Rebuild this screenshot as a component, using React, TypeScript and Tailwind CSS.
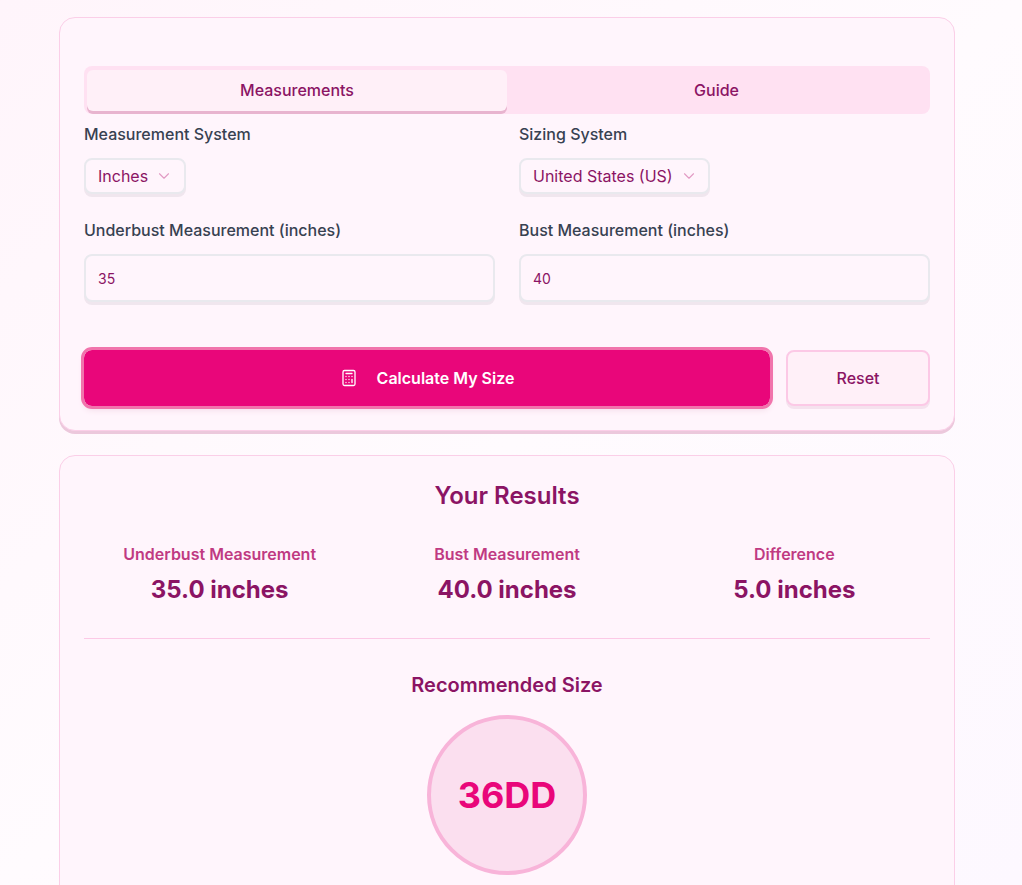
import { Calculator, ChevronDown } from "lucide-react";

const results = [
  { label: "Underbust Measurement", value: "35.0 inches" },
  { label: "Bust Measurement", value: "40.0 inches" },
  { label: "Difference", value: "5.0 inches" },
];

function SelectBox({ label }: { label: string }) {
  return (
    <button className="flex h-9 items-center gap-[7px] rounded-lg border-2 border-[#e9e9ee] bg-[#fff5fc] pl-3 pr-[10.5px] text-base text-[#8b1464] shadow-[0_3px_0_#f0e6ee]">
      {label}
      <ChevronDown className="h-[18px] w-[18px] text-[#e29ac4]" strokeWidth={1.5} />
    </button>
  );
}

function Field({ label, value }: { label: string; value: string }) {
  return (
    <div>
      <label className="block text-base font-[450] leading-6 text-[#374151]">{label}</label>
      <input
        readOnly
        value={value}
        className="mt-3 block h-12 w-full rounded-lg border-2 border-[#e9e9ee] bg-[#fff5fc] px-3 text-sm text-[#8b1464] shadow-[0_3px_0_#f0e6ee] outline-none"
      />
    </div>
  );
}

export default function App() {
  return (
    <div
      className="h-[885px] overflow-hidden bg-gradient-to-br from-[#fff5fb] via-[#fffbfe] to-[#fdf8ff] pr-2 text-[#8b1464]"
      style={{ fontFamily: "Inter, 'Noto Sans', sans-serif" }}
    >
      <div className="mx-auto w-[896px] pt-[17px]">
        {/* Calculator card */}
        <div className="rounded-2xl border border-[#fbcfe8] bg-[#fff5fc] px-6 pb-6 pt-12 shadow-[0_3px_0_#ecc8dc]">
          <div className="flex h-12 rounded-lg bg-[#ffe1f2] p-1">
            <button className="ml-[-1px] h-[41px] w-[420px] rounded-md bg-[#fff0f8] pb-[2px] text-base font-[450] text-[#8b1464] shadow-[0_3px_0_#e8b4cf]">
              Measurements
            </button>
            <button className="h-10 flex-1 pb-[1px] text-base font-[450] text-[#8b1464]">Guide</button>
          </div>

          <div className="mt-2 grid grid-cols-2 gap-x-6">
            <div>
              <div className="text-base font-[450] leading-6 text-[#374151]">Measurement System</div>
              <div className="mt-3 flex"><SelectBox label="Inches" /></div>
            </div>
            <div>
              <div className="text-base font-[450] leading-6 text-[#374151]">Sizing System</div>
              <div className="mt-3 flex"><SelectBox label="United States (US)" /></div>
            </div>
          </div>

          <div className="mt-6 grid grid-cols-2 gap-x-6">
            <Field label="Underbust Measurement (inches)" value="35" />
            <Field label="Bust Measurement (inches)" value="40" />
          </div>

          <div className="mt-12 flex items-center gap-4">
            <button className="flex h-14 w-[686px] items-center justify-center gap-[19px] rounded-lg bg-[#e9067a] text-base font-semibold text-white outline-3 outline-[#f174ac] shadow-[0_4px_6px_#f3dbe8]">
              <Calculator className="h-[18px] w-[18px]" strokeWidth={1.75} />
              Calculate My Size
            </button>
            <button className="h-14 flex-1 rounded-lg border-2 border-[#fcc9e6] bg-[#fff0f8] text-base font-[450] text-[#8b1464] shadow-[0_3px_0_#f5e2ee]">
              Reset
            </button>
          </div>
        </div>

        {/* Results card */}
        <div className="mt-6 rounded-2xl border border-[#fbcfe8] bg-[#fff5fc] px-6 pb-10 pt-6">
          <h2 className="text-center text-2xl font-semibold leading-8 text-[#8b1464]">Your Results</h2>
          <div className="mt-[30px] grid grid-cols-3 gap-4 pb-8">
            {results.map((r) => (
              <div key={r.label} className="text-center">
                <div className="text-base font-semibold leading-6 text-[#c03a82]">{r.label}</div>
                <div className="mt-2 text-2xl font-bold leading-8 text-[#8b1464]">{r.value}</div>
              </div>
            ))}
          </div>
          <div className="border-t border-[#fcc9e6] pt-8 text-center">
            <h3 className="text-xl font-semibold leading-7 text-[#8b1464]">Recommended Size</h3>
            <div className="mx-auto mt-4 flex h-40 w-40 items-center justify-center rounded-full border-4 border-[#f8b4d9] bg-[#fbdfef] text-4xl font-bold text-[#e9067a]">
              36DD
            </div>
          </div>
        </div>
      </div>
    </div>
  );
}
